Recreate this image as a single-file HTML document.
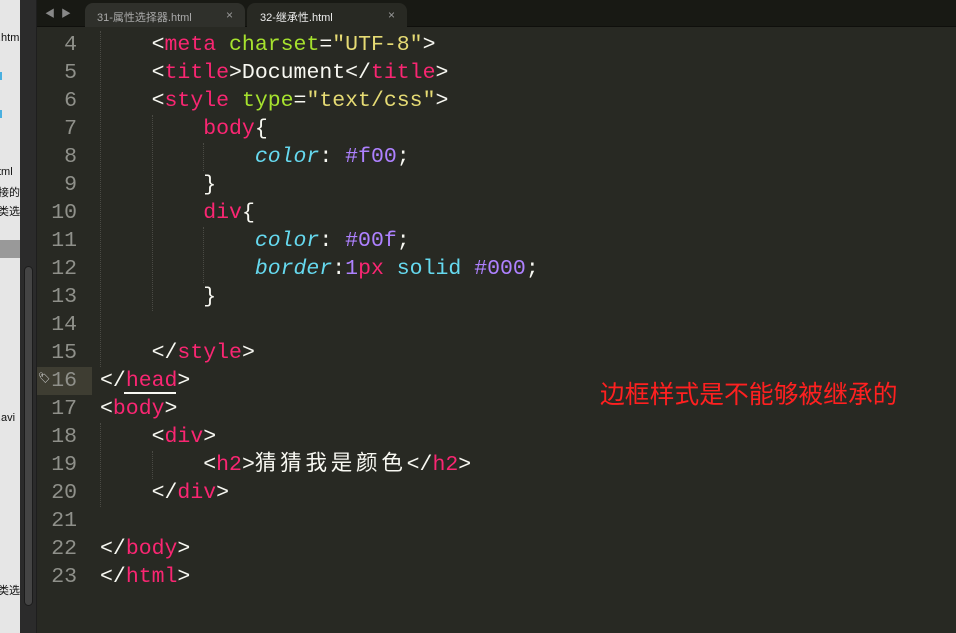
<!DOCTYPE html>
<html><head><meta charset="utf-8"><style>
*{margin:0;padding:0;box-sizing:border-box}
body{width:956px;height:633px;overflow:hidden;background:#282923;position:relative;font-family:"Liberation Mono","Noto Sans CJK SC",monospace}
#left{position:absolute;left:0;top:0;width:20px;height:633px;background:#e6e6e6;overflow:hidden;font:11px "Liberation Sans","Noto Sans CJK SC",sans-serif;color:#111}
#left div{position:absolute;white-space:nowrap}
#side{position:absolute;left:20px;top:0;width:17px;height:633px;background:#2b2b2b;border-right:1px solid #1e1e1e}
#thumb{position:absolute;left:24px;top:266px;width:9px;height:340px;background:#444;border-radius:5px;border:1px solid #1c1c1c}
#tabs{position:absolute;left:37px;top:0;right:0;height:27px;background:#181914;border-bottom:1px solid #0f0f0c}
.tab{position:absolute;top:3px;height:24px;font:11px "Liberation Sans","Noto Sans CJK SC",sans-serif;padding-top:6px;border-radius:8px 8px 0 0}
.tab .x{position:absolute;right:12px;top:5px;font-size:12px;color:#999}
.ln{position:absolute;left:37px;width:40px;text-align:right;color:#8f908a;font-size:21.5px;line-height:28px}
.code{position:absolute;left:100px;font-size:21.5px;line-height:28px;color:#f8f8f2;white-space:pre}
.t{color:#f92672}.a{color:#a6e22e}.s{color:#e6db74}.p{color:#66d9ef;font-style:italic}.n{color:#ae81ff}
.cj{letter-spacing:3.8px}
.g{position:absolute;border-left:1px dotted #4a4a44;width:0}
</style></head><body>
<div id="left">
<div style="top:32px;left:-2px">.htm</div>
<div style="top:72px;left:0;width:2px;height:8px;background:#4ab0e0"></div>
<div style="top:110px;left:0;width:2px;height:8px;background:#4ab0e0"></div>
<div style="top:166px;left:-2px">tml</div>
<div style="top:184px;left:-2px">接的</div>
<div style="top:203px;left:-2px">类选</div>
<div style="top:240px;left:0;width:20px;height:18px;background:#999"></div>
<div style="top:412px;left:-2px">.avi</div>
<div style="top:564px;left:-2px">i</div>
<div style="top:582px;left:-2px">类选</div>
</div>
<div id="side"></div><div id="thumb"></div>
<div id="tabs">
<div style="position:absolute;left:8px;top:5px;color:#888;font-size:10px">◀ ▶</div>
<div class="tab" style="left:48px;width:160px;background:#2f302b;color:#aaa;padding-left:12px">31-属性选择器.html<span class="x">×</span></div>
<div class="tab" style="left:210px;width:160px;background:#282923;color:#eee;padding-left:13px">32-继承性.html<span class="x">×</span></div>
</div>
<div style="position:absolute;left:37px;top:367px;width:55px;height:28px;background:#3e3d32"></div>
<div style="position:absolute;left:38px;top:373px;color:#ddd;font-size:10px">🏷</div>
<div class="g" style="left:100px;top:31px;height:336px"></div>
<div class="g" style="left:152px;top:115px;height:196px"></div>
<div class="g" style="left:203px;top:143px;height:28px"></div>
<div class="g" style="left:203px;top:227px;height:56px"></div>
<div class="g" style="left:100px;top:423px;height:84px"></div>
<div class="g" style="left:152px;top:451px;height:28px"></div>
<div style="position:absolute;left:124px;top:392px;width:52px;height:2px;background:#f8f8f2"></div>
<div class="ln" style="top:31px">4<br>5<br>6<br>7<br>8<br>9<br>10<br>11<br>12<br>13<br>14<br>15<br>16<br>17<br>18<br>19<br>20<br>21<br>22<br>23</div>
<div class="code" style="top:31px">    &lt;<span class="t">meta</span> <span class="a">charset</span>=<span class="s">"UTF-8"</span>&gt;
    &lt;<span class="t">title</span>&gt;Document&lt;/<span class="t">title</span>&gt;
    &lt;<span class="t">style</span> <span class="a">type</span>=<span class="s">"text/css"</span>&gt;
        <span class="t">body</span>{
            <span class="p">color</span>: <span class="n">#f00</span>;
        }
        <span class="t">div</span>{
            <span class="p">color</span>: <span class="n">#00f</span>;
            <span class="p">border</span>:<span class="n">1</span><span class="t">px</span> <span class="p" style="font-style:normal">solid</span> <span class="n">#000</span>;
        }

    &lt;/<span class="t">style</span>&gt;
&lt;/<span class="t">head</span>&gt;
&lt;<span class="t">body</span>&gt;
    &lt;<span class="t">div</span>&gt;
        &lt;<span class="t">h2</span>&gt;<span class="cj">猜猜我是颜色</span>&lt;/<span class="t">h2</span>&gt;
    &lt;/<span class="t">div</span>&gt;

&lt;/<span class="t">body</span>&gt;
&lt;/<span class="t">html</span>&gt;</div>
<div style="position:absolute;left:600px;top:375px;color:#ff2020;font:24.8px 'Liberation Sans','Noto Sans CJK SC',sans-serif;white-space:nowrap">边框样式是不能够被继承的</div>
</body></html>
